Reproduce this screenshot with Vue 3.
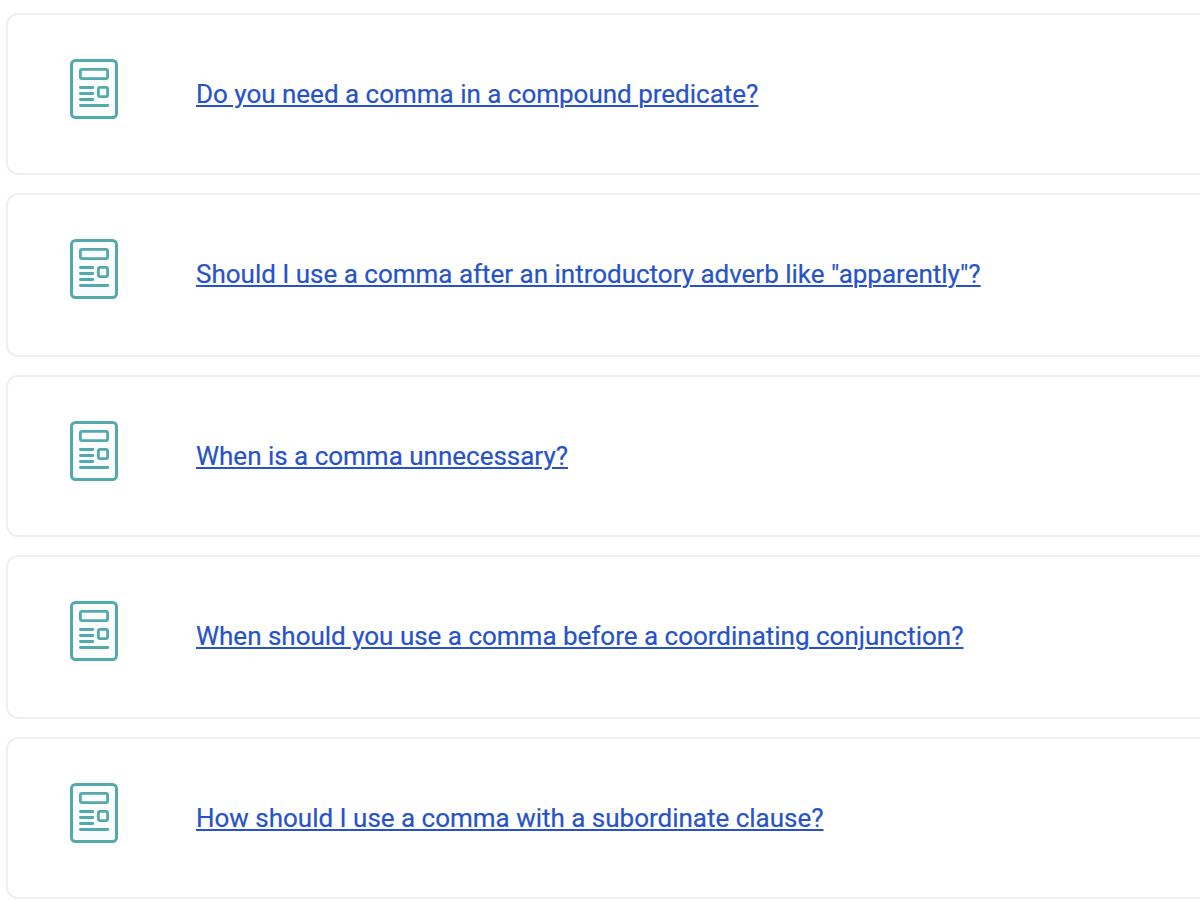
<template>
  <main class="list">
    <article v-for="q in questions" :key="q.text" class="card" :class="{ tall: q.tall }">
      <svg class="icon" width="48" height="60" viewBox="0 0 48 60" fill="none" stroke="#53aaad">
        <rect x="1.5" y="1.5" width="45" height="57" rx="4" fill="#fbfcfc" stroke-width="3" />
        <rect x="10.4" y="10.4" width="27.2" height="9.2" rx="1.6" stroke-width="2.8" />
        <rect x="28.4" y="28.4" width="9.2" height="9.2" rx="1.6" stroke-width="2.8" />
        <path d="M10.4 28.5H22.8M10.4 34.5H22.8M10.4 40.5H22.8M10.4 46.5H37.8" stroke-width="2.8" stroke-linecap="round" />
      </svg>
      <a href="#" @click.prevent>{{ q.text }}</a>
    </article>
  </main>
</template>

<script setup>
const questions = [
  { text: 'Do you need a comma in a compound predicate?' },
  { text: 'Should I use a comma after an introductory adverb like "apparently"?', tall: true },
  { text: 'When is a comma unnecessary?' },
  { text: 'When should you use a comma before a coordinating conjunction?', tall: true },
  { text: 'How should I use a comma with a subordinate clause?' },
]
</script>

<style>
body { margin: 0; background: #fff; overflow: hidden; }
</style>

<style scoped>
.list { height: 904px; box-sizing: border-box; padding: 13px 0 0 6px; display: flex; flex-direction: column; gap: 18px; overflow: hidden; }
.card { flex: none; width: 1240px; height: 162px; box-sizing: border-box; border: 2px solid #ecf0f0; border-radius: 12px; padding: 44px 62px; display: flex; align-items: flex-start; gap: 78px; }
.tall { height: 164px; }
.icon { flex: none; display: block; }
a { color: #2653c9; font-family: Roboto, sans-serif; font-size: 26px; line-height: 30px; letter-spacing: -0.01px; margin-top: 20px; white-space: nowrap; text-decoration: underline; text-decoration-thickness: 2px; text-underline-offset: 2px; -webkit-text-stroke: 0.2px #2653c9; }
</style>
